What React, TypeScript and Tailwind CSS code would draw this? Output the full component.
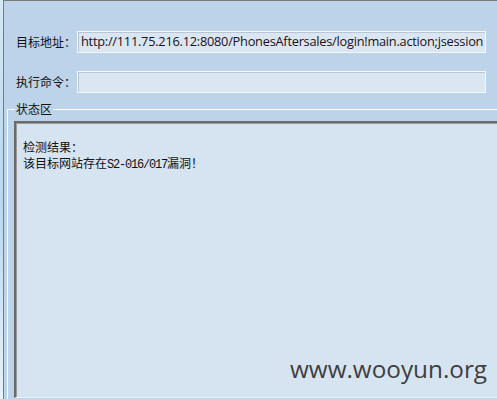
// exploit checker window - status panel
const App = () => {
    return (
        <div className="relative flex w-[497px] h-[399px] overflow-hidden bg-[#bdd3ea] font-['Noto_Sans_CJK_SC',sans-serif] text-[12px] text-[#111]">
            {/* desktop strip on the left */}
            <div className="w-[3px] h-full bg-gradient-to-b from-[#d4e8f4] via-[#b8d8ec] to-[#e6f2f8]"></div>

            <div className="flex-1 flex flex-col border-l border-t border-[#7a7a7a] bg-[#bdd3ea]">
                <div className="flex items-center mt-[30px] pl-[12px] h-[22px]">
                    <span className="w-[61px] leading-none">目标地址：</span>
                    <div className="w-[409px] h-[22px] flex items-center pl-[3px] bg-[#dbe6f3] border border-[#f4f8fc] shadow-[inset_1px_1px_0_#b9c6d4] overflow-hidden whitespace-nowrap">
                        <span className="font-['Open_Sans',sans-serif] text-[12.8px] tracking-[-0.25px] text-[#1c1020]">http://111.75.216.12:8080/PhonesAftersales/login!main.action;jsession</span>
                    </div>
                </div>

                <div className="flex items-center mt-[18px] pl-[12px] h-[22px]">
                    <span className="w-[61px] leading-none">执行命令：</span>
                    <div className="w-[409px] h-[22px] bg-[#dbe6f3] border border-[#f4f8fc] shadow-[inset_1px_1px_0_#b9c6d4]"></div>
                </div>

                <fieldset className="flex-1 flex flex-col ml-[3px] mt-[8px] -mr-[10px] border-l border-t border-white min-w-0">
                    <legend className="ml-[7px] px-[1px] leading-[16px]">状态区</legend>
                    <div className="flex-1 ml-[6px] mt-[4px] mb-[1px] pt-[16px] pl-[7px] bg-[#d6e4f2] border-t-2 border-l-2 border-[#6a6a6a] shadow-[inset_1px_1px_0_#9a9a9a] border-b border-b-[#eef3f9] leading-[16px]">
                        <div>检测结果：</div>
                        <div>
                            该目标网站存在<span className="font-['Liberation_Mono',monospace] tracking-[-1.2px]">S2-016/017</span>漏洞！
                        </div>
                    </div>
                </fieldset>
            </div>

            {/* watermark */}
            <div className="absolute left-[290px] top-[354px] font-['Open_Sans',sans-serif] text-[24.3px] leading-[30px] text-[#3e3e3e]">www.wooyun.org</div>
        </div>
    )
}

export default App
